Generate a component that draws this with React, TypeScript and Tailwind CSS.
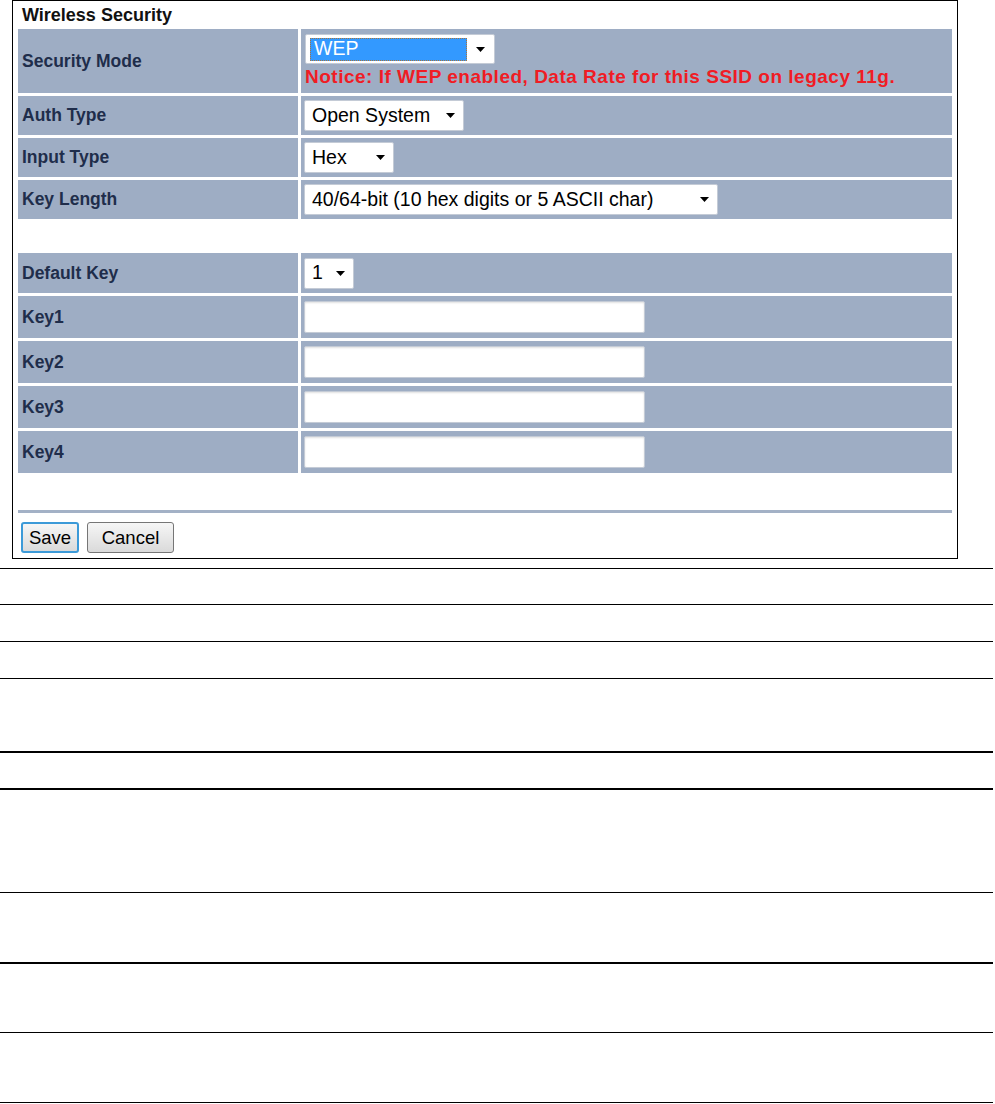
import type { ReactNode } from 'react'

function Arrow() {
  return (
    <svg width="9" height="5" viewBox="0 0 9 5" className="shrink-0">
      <polygon points="0,0 9,0 4.5,5" fill="#000" />
    </svg>
  )
}

interface SelectProps {
  value: string
  className: string
}

function FakeSelect({ value, className }: SelectProps) {
  return (
    <div
      className={`flex h-[31px] items-center justify-between rounded-[2px] border border-[#c4cbd6] bg-white pl-[7px] pr-[8px] text-[19.5px] text-black ${className}`}
    >
      <span className="whitespace-nowrap">{value}</span>
      <Arrow />
    </div>
  )
}

function KeyInput() {
  return (
    <input
      type="text"
      className="h-[32px] w-[341px] rounded-[2px] border border-[#c4cbd6] bg-white px-1 text-[18px] shadow-[inset_0_1px_2px_rgba(0,0,0,0.12)] outline-none"
    />
  )
}

function Row({ label, height, children }: { label: string; height: string; children: ReactNode }) {
  return (
    <>
      <div className={`flex items-center bg-[#9eadc4] pl-[4px] text-[17.5px] font-bold text-[#1f2d4b] ${height}`}>
        {label}
      </div>
      <div className={`flex items-center bg-[#9eadc4] pl-[3px] ${height}`}>{children}</div>
    </>
  )
}

export default function App() {
  return (
    <div className="min-h-[1104px] w-[995px] bg-white font-['Liberation_Sans',Arial,sans-serif]">
      <div className="ml-[12px] w-[946px] border border-black">
        <div className="flex h-[28px] items-center pl-[9px] text-[18px] font-bold text-[#111]">
          Wireless Security
        </div>

        <div className="grid grid-cols-[280px_1fr] gap-[3px] px-[5px]">
          <div className="flex h-[64px] items-center bg-[#9eadc4] pl-[4px] text-[17.5px] font-bold text-[#1f2d4b]">
            Security Mode
          </div>
          <div className="flex h-[64px] flex-col bg-[#9eadc4] pl-[4px] pt-[5px]">
            <div className="flex h-[30px] w-[190px] items-center justify-between rounded-[2px] border border-[#c4cbd6] bg-white pl-[4px] pr-[9px] text-[19.5px]">
              <span className="flex h-[23px] w-[157px] items-center border border-dotted border-[#a8743a] bg-[#3399ff] pl-[3px] text-white">
                WEP
              </span>
              <Arrow />
            </div>
            <div className="mt-[2px] whitespace-nowrap text-[19px] font-bold leading-[22px] tracking-[0.5px] text-[#f01c24]">
              Notice: If WEP enabled, Data Rate for this SSID on legacy 11g.
            </div>
          </div>

          <Row label="Auth Type" height="h-[39px]">
            <FakeSelect value="Open System" className="w-[160px]" />
          </Row>
          <Row label="Input Type" height="h-[39px]">
            <FakeSelect value="Hex" className="w-[90px]" />
          </Row>
          <Row label="Key Length" height="h-[39px]">
            <FakeSelect value="40/64-bit (10 hex digits or 5 ASCII char)" className="w-[414px]" />
          </Row>

          <div className="col-span-2 h-[28px]" />

          <Row label="Default Key" height="h-[40px]">
            <FakeSelect value="1" className="w-[50px]" />
          </Row>
          {['Key1', 'Key2', 'Key3', 'Key4'].map((k) => (
            <Row key={k} label={k} height="h-[42px]">
              <KeyInput />
            </Row>
          ))}
        </div>

        <div className="mx-[5px] mt-[37px] h-[3px] bg-[#a3b1c6]" />

        <div className="flex gap-[8px] pb-[5px] pl-[8px] pt-[9px]">
          <button className="h-[31px] w-[58px] rounded-[3px] border-2 border-[#3c9ad8] bg-gradient-to-b from-[#f6f6f6] to-[#dadada] text-[18.5px] text-black">
            Save
          </button>
          <button className="h-[31px] w-[87px] rounded-[3px] border border-[#767676] bg-gradient-to-b from-[#f6f6f6] to-[#dadada] text-[18.5px] text-black">
            Cancel
          </button>
        </div>
      </div>

      <div className="mt-[9px] w-[993px]">
        <div className="h-[37px] border-y border-black" />
        <div className="h-[37px] border-b border-black" />
        <div className="h-[37px] border-b border-black" />
        <div className="h-[74px] border-b-2 border-black" />
        <div className="h-[37px] border-b-2 border-black" />
        <div className="h-[103px] border-b border-black" />
        <div className="h-[71px] border-b-2 border-black" />
        <div className="h-[69px] border-b border-black" />
        <div className="h-[70px] border-b border-black" />
      </div>
    </div>
  )
}
